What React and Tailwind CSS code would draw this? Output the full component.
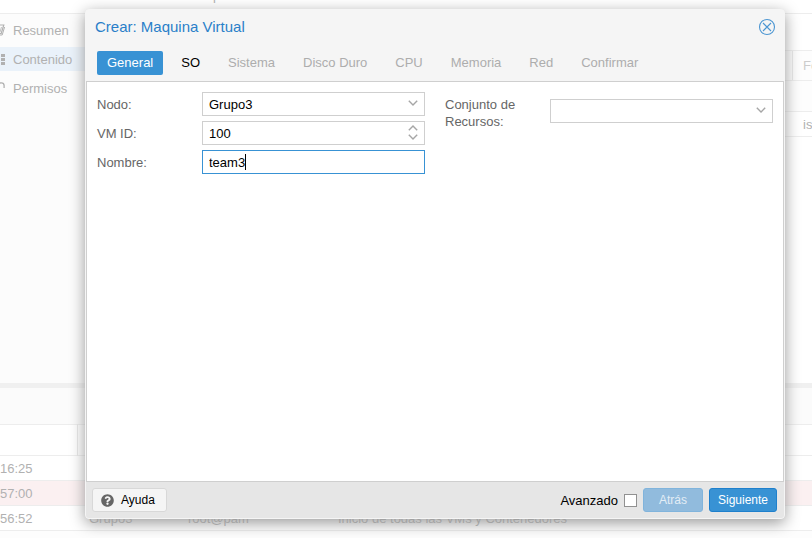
import { FaQuestionCircle } from "react-icons/fa";

const field = "block h-6 w-full border bg-white px-1.5 text-black outline-none";
const tabs = ["Sistema", "Disco Duro", "CPU", "Memoria", "Red", "Confirmar"];

function Chevron({ up }) {
  return (
    <svg width="10" height="6" viewBox="0 0 10 6" fill="none" stroke="#a6a6a6" strokeWidth="1.4">
      <path d={up ? "M0.800 5.2L5 1L9.2 5.2" : "M0.800 0.8L5 5L9.2 0.8"} />
    </svg>
  );
}

function BookIcon() {
  return (
    <svg className="shrink-0" width="13" height="12" viewBox="0 0 13 12" fill="none" stroke="currentColor">
      <path d="M4 1H11.8L9.2 9.5H2" strokeWidth="1.2" />
      <path d="M12.6 3L10.2 11H2" strokeWidth="1" />
      <path d="M9.5 3L8 8" strokeWidth="0.8" />
    </svg>
  );
}

function GridIcon() {
  return (
    <svg className="shrink-0" width="13" height="11" viewBox="0 0 13 11" fill="currentColor">
      <path d="M0 0h3v3H0zM4 0h4v3H4zM9 0h4v3H9zM0 4h3v3H0zM4 4h4v3H4zM9 4h4v3H9zM0 8h3v3H0zM4 8h4v3H4zM9 8h4v3H9z" />
    </svg>
  );
}

function UnlockIcon() {
  return (
    <svg className="shrink-0" width="13" height="12" viewBox="0 0 13 12">
      <path d="M6.5 6V3.6a2.8 2.8 0 0 1 5.600 0V6" fill="none" stroke="currentColor" strokeWidth="1.3" />
      <rect y="6" width="8" height="6" rx="1" fill="currentColor" />
    </svg>
  );
}

function NavItem({ icon, label, active }) {
  return (
    <a href="#" className={`flex h-6 items-center gap-2 ${active ? "bg-[#eaf2fa]" : ""}`}>
      <span className="flex w-[5px] shrink-0 justify-end overflow-hidden">{icon}</span>
      {label}
    </a>
  );
}

function LogRow({ time, node, user, text, error }) {
  return (
    <tr className={`h-[25px] border-b border-[#ededed] ${error ? "bg-[#fbf0f1]" : "bg-white"}`}>
      <td>{time}</td>
      <td className="pl-3">{node}</td>
      <td className="pl-[11px]">{user}</td>
      <td className="pl-[11px]">{text}</td>
    </tr>
  );
}

function Background() {
  return (
    <div className="flex min-h-screen flex-col text-[#b1b1b1]">
      <header className="flex h-[13px] overflow-hidden bg-white pl-[213px]">
        <span className="-mt-3 leading-4">p</span>
      </header>
      <div className="flex h-[370px] border-t border-[#ededed]">
        <nav className="flex w-[120px] flex-col gap-[5px] bg-[#fcfcfc] pt-1">
          <NavItem label="Resumen" icon={<BookIcon />} />
          <NavItem active label="Contenido" icon={<GridIcon />} />
          <NavItem label="Permisos" icon={<UnlockIcon />} />
        </nav>
        <main className="flex flex-1 flex-col bg-white">
          <div className="h-9" />
          <div className="flex h-[31px] items-center justify-end border-y border-[#ededed] bg-[#fdfdfd] text-[#cccccc]">
            <span className="flex h-full w-5 items-center overflow-hidden border-l border-[#e8e8e8] pl-2.5">
              Fo
            </span>
          </div>
          <div className="h-[31px] border-b border-[#ededed] bg-[#fdfdfd]" />
          <div className="flex h-[25px] items-center justify-end border-b border-[#ededed]">
            <span className="w-[9px] overflow-hidden">is</span>
          </div>
        </main>
      </div>
      <div className="h-[5px] bg-[#f0f0f0]" />
      <div className="h-9 bg-[#fbfbfb]" />
      <table className="w-full table-fixed border-collapse">
        <thead>
          <tr className="h-[31px] border-y border-[#ededed] bg-white">
            <th className="w-[77px] border-r border-[#e8e8e8]" />
            <th className="w-[100px]" />
            <th className="w-[150px]" />
            <th />
          </tr>
        </thead>
        <tbody>
          <LogRow time="16:25" />
          <LogRow time="57:00" error />
          <LogRow time="56:52" node="Grupo3" user="root@pam" text="Inicio de todas las VMs y Contenedores" />
        </tbody>
      </table>
    </div>
  );
}

export default function App() {
  return (
    <div className="relative h-screen overflow-hidden bg-[#fdfdfd] font-['Liberation_Sans',Arial,sans-serif] text-[13px] leading-[17px]">
      <Background />
      <div className="absolute inset-0 flex items-start pt-[9px] pr-[27px] pl-[85px]">
        <section
          role="dialog"
          aria-label="Crear: Maquina Virtual"
          className="flex flex-1 flex-col rounded-[4px] border border-[#f5f5f5] bg-[#f5f5f5] shadow-[0_4px_15px_#999999]"
        >
          <header className="flex h-[35px] items-center justify-between pr-2 pb-0.5 pl-[9px]">
            <h1 className="text-[15px] text-[#2a7fc9]">Crear: Maquina Virtual</h1>
            <button aria-label="Cerrar">
              <svg width="18" height="18" viewBox="0 0 18 18" fill="none" stroke="#4c96d2" strokeWidth="1.1">
                <circle cx="9" cy="9" r="7.5" />
                <path d="M5 5L13 13M13 5L5 13" />
              </svg>
            </button>
          </header>
          <div className="flex h-9 items-start gap-2 pt-1.5 pl-[11px] text-[#adadad]">
            <button className="h-6 rounded-[2px] bg-[#3892d4] px-2.5 pb-0.5 text-white">General</button>
            <button className="h-6 px-2.5 pb-0.5 text-black">SO</button>
            {tabs.map((t) => (
              <button key={t} disabled className="h-6 px-2.5 pb-0.5">
                {t}
              </button>
            ))}
          </div>
          <div className="grid min-h-[401px] grid-cols-2 items-start gap-5 border border-[#cfcfcf] bg-white p-2.5 text-[#666666]">
            <div className="flex flex-col gap-[5px]">
              <div className="flex items-center">
                <label htmlFor="nodo" className="w-[105px] shrink-0">Nodo:</label>
                <div className="relative flex-1">
                  <select id="nodo" className={`${field} appearance-none border-[#cfcfcf]`}>
                    <option>Grupo3</option>
                  </select>
                  <span className="pointer-events-none absolute top-2 right-[7px]">
                    <Chevron />
                  </span>
                </div>
              </div>
              <div className="flex items-center">
                <label htmlFor="vmid" className="w-[105px] shrink-0">VM ID:</label>
                <div className="relative flex-1">
                  <input id="vmid" defaultValue="100" className={`${field} border-[#cfcfcf]`} />
                  <span className="pointer-events-none absolute top-1 right-[7px] flex flex-col gap-[3px]">
                    <Chevron up />
                    <Chevron />
                  </span>
                </div>
              </div>
              <div className="flex items-center">
                <label htmlFor="nombre" className="w-[105px] shrink-0">Nombre:</label>
                <div className="relative flex-1">
                  <input
                    id="nombre"
                    autoFocus
                    defaultValue="team3"
                    className={`${field} border-[#3892d4] caret-transparent`}
                  />
                  <span className="pointer-events-none absolute top-1 left-[43px] h-4 w-px bg-black" />
                </div>
              </div>
            </div>
            <div className="flex items-start">
              <label htmlFor="recursos" className="w-[105px] shrink-0 pt-1">
                Conjunto de Recursos:
              </label>
              <div className="relative mt-[7px] flex-1">
                <select id="recursos" className={`${field} appearance-none border-[#cfcfcf]`} />
                <span className="pointer-events-none absolute top-2 right-[7px]">
                  <Chevron />
                </span>
              </div>
            </div>
          </div>
          <footer className="flex h-9 items-center gap-1.5 rounded-b-[3px] bg-[#e6e6e6] pr-[7px] pl-1.5">
            <button className="mr-auto flex h-6 items-center gap-[7px] rounded-[3px] border border-[#d8d8d8] bg-[#f5f5f5] pr-[11px] pl-2 text-xs text-black">
              <FaQuestionCircle size={13} color="#666666" />
              Ayuda
            </button>
            <label htmlFor="avanzado" className="text-black">Avanzado</label>
            <input
              id="avanzado"
              type="checkbox"
              className="size-[13px] appearance-none border border-[#919191] bg-white"
            />
            <button
              disabled
              className="h-6 w-[60px] rounded-[3px] border border-[#81b4dc] bg-[#91bbdd] text-xs text-[#e3edf5]"
            >
              Atrás
            </button>
            <button className="h-6 w-[68px] rounded-[3px] border border-[#1f80cc] bg-[#3892d4] text-xs text-white">
              Siguiente
            </button>
          </footer>
        </section>
      </div>
    </div>
  );
}
